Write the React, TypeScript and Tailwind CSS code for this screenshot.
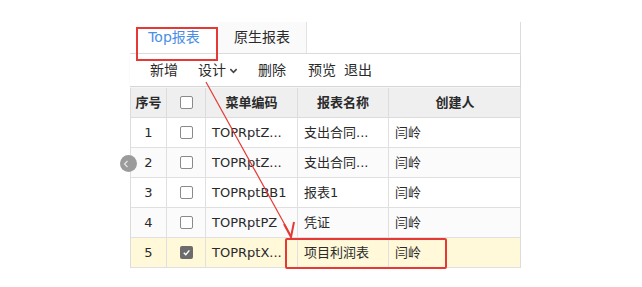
type Row = { no: number; code: string; name: string; owner: string; checked?: boolean };

const rows: Row[] = [
  { no: 1, code: "TOPRptZ...", name: "支出合同...", owner: "闫岭" },
  { no: 2, code: "TOPRptZ...", name: "支出合同...", owner: "闫岭" },
  { no: 3, code: "TOPRptBB1", name: "报表1", owner: "闫岭" },
  { no: 4, code: "TOPRptPZ", name: "凭证", owner: "闫岭" },
  { no: 5, code: "TOPRptX...", name: "项目利润表", owner: "闫岭", checked: true },
];

const font = { fontFamily: '"DejaVu Sans", "Noto Sans CJK SC", sans-serif' };

function Checkbox({ checked }: { checked?: boolean }) {
  if (checked) {
    return (
      <span className="flex h-[13px] w-[13px] items-center justify-center rounded-[2px] bg-[#6b6b6b]">
        <svg width="9" height="9" viewBox="0 0 10 10">
          <path d="M2 5.2 L4.2 7.4 L8.2 2.6" stroke="white" strokeWidth="1.6" fill="none" />
        </svg>
      </span>
    );
  }
  return <span className="h-[13px] w-[13px] rounded-[2px] border border-[#8a8a8a] bg-white" />;
}

export default function App() {
  const cols = "grid-cols-[36px_39px_92px_91px_132px]";

  return (
    <div className="relative h-[287px] w-[642px] overflow-hidden bg-white text-[13px] text-[#2a2a2a]" style={font}>
      <div className="ml-[130px] mt-[22px] w-[391px] border-r border-[#dcdcdc]">
        {/* tabs */}
        <div className="flex h-[32px] border-b border-[#dcdcdc] text-[14px]">
          <div className="flex w-[88px] items-center justify-center bg-white text-[#4a8ee6]">Top报表</div>
          <div className="flex w-[89px] items-center justify-center border-r border-[#e3e3e3] bg-[#fafafa]">原生报表</div>
        </div>
        {/* toolbar */}
        <div className="flex h-[33px] items-center border-b border-[#d6d6d6] pl-[20px] text-[14px] shadow-[0_1px_2px_rgba(0,0,0,0.06)]">
          <span>新增</span>
          <span className="ml-[20px] flex items-center gap-[3px]">
            设计
            <svg width="9" height="9" viewBox="0 0 10 10">
              <path d="M1.5 3.5 L5 7 L8.5 3.5" stroke="#444" strokeWidth="1.7" fill="none" />
            </svg>
          </span>
          <span className="ml-[20px]">删除</span>
          <span className="ml-[22px]">预览</span>
          <span className="ml-[8px]">退出</span>
        </div>
        {/* table */}
        <div className="mt-[1px] border-l border-[#dcdcdc]">
          <div className={`grid ${cols} h-[30px] border-b border-[#dcdcdc] bg-[#efefef] font-bold`}>
            <div className="flex items-center justify-center border-r border-[#dcdcdc]">序号</div>
            <div className="flex items-center justify-center border-r border-[#dcdcdc]">
              <Checkbox />
            </div>
            <div className="flex items-center justify-center border-r border-[#dcdcdc]">菜单编码</div>
            <div className="flex items-center justify-center border-r border-[#dcdcdc]">报表名称</div>
            <div className="flex items-center justify-center">创建人</div>
          </div>
          {rows.map((r) => (
            <div
              key={r.no}
              className={`grid ${cols} h-[30px] border-b border-[#e0e0e0] ${r.checked ? "bg-[#fff8d9]" : r.no % 2 === 0 ? "bg-[#fbfbfb]" : "bg-white"}`}
            >
              <div className="flex items-center justify-center border-r border-[#e0e0e0]">{r.no}</div>
              <div className="flex items-center justify-center border-r border-[#e0e0e0]">
                <Checkbox checked={r.checked} />
              </div>
              <div className="flex items-center border-r border-[#e0e0e0] pl-[6px]">{r.code}</div>
              <div className="flex items-center border-r border-[#e0e0e0] pl-[6px]">{r.name}</div>
              <div className="flex items-center pl-[6px]">{r.owner}</div>
            </div>
          ))}
        </div>
      </div>

      {/* collapse handle */}
      <div className="absolute left-[120px] top-[155px] flex h-[17px] w-[17px] items-center justify-start rounded-full bg-[#9b9b9b] pl-[3px]">
        <svg width="6" height="8" viewBox="0 0 6 8">
          <path d="M4.5 1 L1.5 4 L4.5 7" stroke="#e6e6e6" strokeWidth="1.2" fill="none" />
        </svg>
      </div>

      {/* annotation boxes */}
      <div className="absolute left-[136px] top-[27px] h-[34px] w-[82px] border-2 border-[#e53935]" />
      <div className="absolute left-[285px] top-[238px] h-[31px] w-[162px] rounded-[2px] border-2 border-[#e53935]" />

      {/* annotation arrow */}
      <svg className="absolute left-0 top-0" width="642" height="287">
        <line x1="206" y1="82" x2="290" y2="234" stroke="#e53935" strokeWidth="1.2" />
        <path d="M284 224 L291 237 L294 222" stroke="#e53935" strokeWidth="2" fill="none" />
      </svg>
    </div>
  );
}
